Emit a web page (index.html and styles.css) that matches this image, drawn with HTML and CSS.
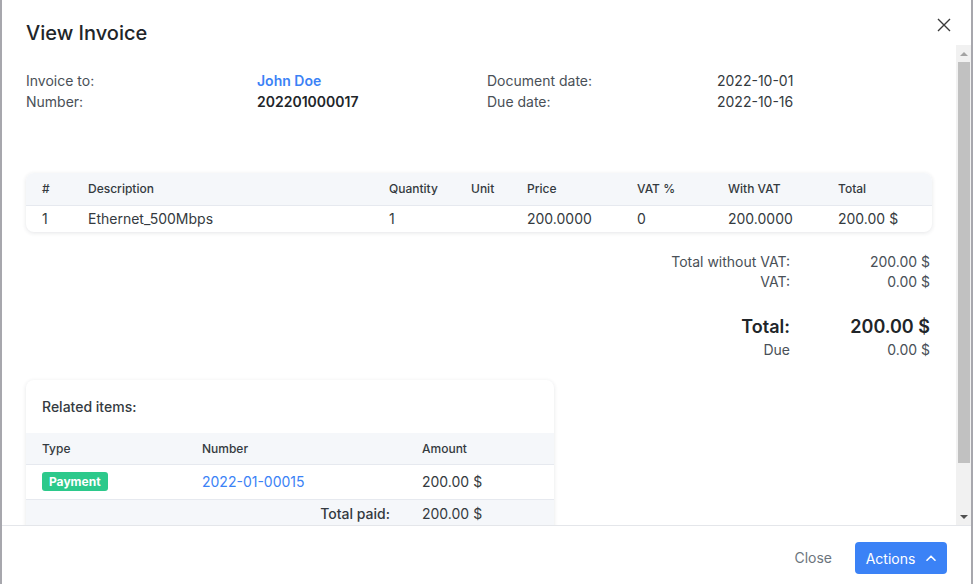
FILE: index.html
```html
<!DOCTYPE html>
<html>
<head>
<meta charset="utf-8">
<link rel="stylesheet" href="styles.css">
</head>
<body>
<div class="modal">
  <div class="modal-header">
    <h1 class="modal-title">View Invoice</h1>
    <button class="close-x" aria-label="Close">
      <svg width="14" height="14" viewBox="0 0 14 14"><path d="M1 1L13 13M13 1L1 13" stroke="#3a3a3a" stroke-width="1.4" fill="none"/></svg>
    </button>
  </div>
  <div class="modal-body-wrap">
  <div class="modal-body">
    <div class="info">
      <div class="lbl">Invoice to:</div>
      <div class="val"><a class="link strong">John Doe</a></div>
      <div class="lbl">Document date:</div>
      <div class="val plain">2022-10-01</div>
      <div class="lbl">Number:</div>
      <div class="val strong">202201000017</div>
      <div class="lbl">Due date:</div>
      <div class="val plain">2022-10-16</div>
    </div>

    <div class="card items">
      <table class="tbl">
        <colgroup>
          <col style="width:46px"><col style="width:301px"><col style="width:82px"><col style="width:56px"><col style="width:110px"><col style="width:91px"><col style="width:110px"><col>
        </colgroup>
        <thead>
          <tr><th>#</th><th>Description</th><th>Quantity</th><th>Unit</th><th>Price</th><th>VAT %</th><th>With VAT</th><th>Total</th></tr>
        </thead>
        <tbody>
          <tr><td>1</td><td>Ethernet_500Mbps</td><td>1</td><td></td><td>200.0000</td><td>0</td><td>200.0000</td><td>200.00 $</td></tr>
        </tbody>
      </table>
    </div>

    <div class="totals">
      <div class="t-lbl">Total without VAT:</div><div class="t-val">200.00 $</div>
      <div class="t-lbl">VAT:</div><div class="t-val">0.00 $</div>
      <div class="t-lbl big">Total:</div><div class="t-val big">200.00 $</div>
      <div class="t-lbl">Due</div><div class="t-val">0.00 $</div>
    </div>

    <div class="card related">
      <div class="related-title">Related items:</div>
      <table class="tbl rel">
        <colgroup><col style="width:160px"><col style="width:220px"><col></colgroup>
        <thead><tr><th>Type</th><th>Number</th><th>Amount</th></tr></thead>
        <tbody>
          <tr class="rel-row"><td><span class="badge">Payment</span></td><td><a class="link">2022-01-00015</a></td><td>200.00 $</td></tr>
          <tr class="paid-row"><td colspan="2" class="paid-lbl">Total paid:</td><td>200.00 $</td></tr>
        </tbody>
      </table>
    </div>
  </div>
  <div class="scrollbar">
    <div class="sb-btn">
      <svg width="8" height="4" viewBox="0 0 8 4"><path d="M0 4L4 0L8 4Z" fill="#a3a3a3"/></svg>
    </div>
    <div class="sb-track"><div class="sb-thumb"></div></div>
    <div class="sb-btn">
      <svg width="8" height="4" viewBox="0 0 8 4"><path d="M0 0L8 0L4 4Z" fill="#505050"/></svg>
    </div>
  </div>
  </div>
  <div class="modal-footer">
    <button class="btn-close">Close</button>
    <button class="btn-actions">Actions
      <svg width="10" height="6" viewBox="0 0 10 6"><path d="M1 5.2L5 1.2L9 5.2" stroke="#fff" stroke-width="1.6" fill="none" stroke-linecap="round" stroke-linejoin="round"/></svg>
    </button>
  </div>
</div>
</body>
</html>
```

FILE: styles.css
```css
* { box-sizing: border-box; }
html, body { margin: 0; padding: 0; height: 100%; overflow: hidden; }
body {
  background: #a7a7ad;
  font-family: Inter, "Noto Sans", sans-serif;
  color: #212529;
  font-size: 14px;
}
.modal {
  margin-left: 2px;
  width: 969px;
  height: 584px;
  background: #fff;
  display: flex;
  flex-direction: column;
}
.modal-header {
  height: 45px;
  flex: 0 0 45px;
  display: flex;
  justify-content: space-between;
  align-items: flex-start;
  padding: 0 20px 0 24px;
}
.modal-title {
  margin: 22px 0 0;
  font-size: 20px;
  line-height: 22px;
  font-weight: 500;
  color: #212529;
}
.close-x {
  margin-top: 18px;
  border: 0;
  background: none;
  padding: 0;
  width: 14px;
  height: 14px;
  display: flex;
}
.modal-body-wrap {
  flex: 1 1 auto;
  min-height: 0;
  display: flex;
}
.modal-body {
  flex: 1 1 auto;
  min-width: 0;
  overflow: hidden;
  padding: 25px 24px 0 24px;
}
.scrollbar {
  flex: 0 0 15px;
  width: 15px;
  background: #f1f1f1;
  display: flex;
  flex-direction: column;
}
.sb-btn {
  flex: 0 0 17px;
  display: flex;
  align-items: center;
  justify-content: center;
}
.sb-track {
  flex: 1 1 auto;
  padding: 0 1px 0 2px;
}
.sb-thumb {
  height: 401px;
  background: #c1c1c1;
}
.info {
  display: grid;
  grid-template-columns: 231px 230px 230px auto;
  line-height: 21px;
}
.lbl { color: #495057; }
.val.strong, .strong { font-weight: 600; color: #212529; }
.val.plain { color: #343a40; }
.link { color: #3b82f6; text-decoration: none; }
.card {
  background: #fff;
  border-radius: 8px;
  box-shadow: 0 1px 4px rgba(30, 40, 60, 0.12);
  overflow: hidden;
}
.items { margin-top: 61px; }
.tbl {
  width: 100%;
  border-collapse: collapse;
  table-layout: fixed;
}
.tbl th {
  background: #f5f7fa;
  font-size: 12px;
  font-weight: 500;
  color: #343a40;
  text-align: left;
  padding: 0 16px;
  height: 32px;
  border-bottom: 1px solid #e6e9ef;
}
.tbl td {
  padding: 0 16px;
  height: 27px;
  color: #343a40;
  white-space: nowrap;
}
.totals {
  display: grid;
  grid-template-columns: auto 140px;
  justify-content: end;
  margin-top: 20px;
  margin-right: 2px;
  line-height: 20px;
  color: #495057;
}
.t-lbl, .t-val { text-align: right; }
.t-lbl.big, .t-val.big {
  margin-top: 21px;
  font-size: 18px;
  line-height: 27px;
  font-weight: 600;
  color: #212529;
}
.related {
  width: 528px;
  margin-top: 20px;
  border-radius: 8px 8px 0 0;
}
.related-title {
  padding: 17px 16px 0;
  line-height: 20px;
  font-weight: 500;
  color: #343a40;
  margin-bottom: 16px;
}
.rel th { height: 31px; }
.rel .rel-row td {
  height: 35px;
  border-bottom: 1px solid #e6e9ef;
}
.rel .paid-row td {
  background: #f5f7fa;
  height: 32px;
  vertical-align: top;
  padding-top: 5px;
}
.paid-lbl { text-align: right; font-weight: 500; }
.badge {
  display: inline-block;
  background: #2cc98b;
  color: #fff;
  font-size: 12px;
  font-weight: 700;
  line-height: 19px;
  padding: 0 7px;
  border-radius: 3px;
}
.modal-footer {
  flex: 0 0 59px;
  border-top: 1px solid #e4e6ea;
  display: flex;
  justify-content: flex-end;
  align-items: flex-start;
  padding: 16px 24px 0 0;
  gap: 11px;
}
.btn-close {
  border: 0;
  background: none;
  font-family: inherit;
  font-size: 14px;
  line-height: 20px;
  color: #6c757d;
  padding: 6px 12px;
}
.btn-actions {
  height: 32px;
  width: 92px;
  border: 0;
  border-radius: 4px;
  background: #3b82f6;
  color: #fff;
  font-family: inherit;
  font-size: 14px;
  display: flex;
  align-items: center;
  justify-content: center;
  gap: 11px;
  padding: 0;
}
```
